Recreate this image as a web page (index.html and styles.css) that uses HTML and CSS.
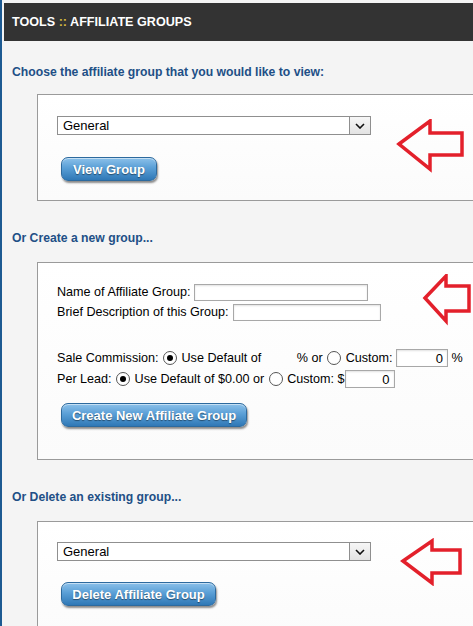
FILE: index.html
```html
<!DOCTYPE html>
<html>
<head>
<meta charset="utf-8">
<link rel="stylesheet" href="styles.css">
</head>
<body>
<div class="page">
  <div class="titlebar">TOOLS <span class="sep">::</span> AFFILIATE GROUPS</div>

  <h2 class="heading h-first">Choose the affiliate group that you would like to view:</h2>
  <div class="box box-view">
    <div class="select-wrap"><select class="select"><option>General</option></select><span class="select-btn"><svg width="10" height="6" viewBox="0 0 10 6"><path d="M1 1 L5 5 L9 1" fill="none" stroke="#111" stroke-width="1.6"/></svg></span></div>
    <button class="btn btn-view">View Group</button>
    <svg class="arrow arrow-1" width="70" height="54" viewBox="0 0 70 54"><path d="M3 25 L34 2 L34 14 L66 14 L66 36 L34 36 L34 50 Z" fill="none" stroke="#e3202b" stroke-width="3.5" stroke-linejoin="miter"/></svg>
  </div>

  <h2 class="heading">Or Create a new group...</h2>
  <div class="box box-create">
    <div class="row"><span class="lbl">Name of Affiliate Group:</span><input class="text text-name" type="text"></div>
    <div class="row"><span class="lbl">Brief Description of this Group:</span><input class="text text-desc" type="text"></div>
    <div class="row row-gap">Sale Commission: <input class="radio" type="radio" name="sc" checked> Use Default of <span class="blank"></span>% or <input class="radio" type="radio" name="sc"> Custom: <input class="text num num-pct" type="text" value="0"> %</div>
    <div class="row">Per Lead: <input class="radio" type="radio" name="pl" checked> Use Default of $0.00 or <input class="radio" type="radio" name="pl"> Custom: $<input class="text num num-lead" type="text" value="0"></div>
    <button class="btn btn-create">Create New Affiliate Group</button>
    <svg class="arrow arrow-2" width="52" height="52" viewBox="0 0 52 52"><path d="M3 24 L24 2 L24 12 L47 12 L47 37 L24 37 L24 47 Z" fill="none" stroke="#e3202b" stroke-width="3.5"/></svg>
  </div>

  <h2 class="heading">Or Delete an existing group...</h2>
  <div class="box box-delete">
    <div class="select-wrap"><select class="select"><option>General</option></select><span class="select-btn"><svg width="10" height="6" viewBox="0 0 10 6"><path d="M1 1 L5 5 L9 1" fill="none" stroke="#111" stroke-width="1.6"/></svg></span></div>
    <button class="btn btn-delete">Delete Affiliate Group</button>
    <svg class="arrow arrow-3" width="64" height="48" viewBox="0 0 64 48"><path d="M3 23 L32 3 L32 12 L60 12 L60 35 L32 35 L32 45 Z" fill="none" stroke="#e3202b" stroke-width="3.5"/></svg>
  </div>
</div>
</body>
</html>
```

FILE: styles.css
```css
html, body {
  margin: 0;
  padding: 0;
  background: #f4f4f4;
  overflow: hidden;
}
body {
  font-family: "Liberation Sans", Arial, sans-serif;
  font-size: 12.6px;
  color: #000;
}
.page {
  border-left: 2px solid #1d5a92;
  padding-left: 2px;
  padding-top: 3px;
  min-height: 626px;
  box-sizing: border-box;
}
.titlebar {
  background: #333333;
  color: #fff;
  font-weight: bold;
  font-size: 12.6px;
  height: 38px;
  line-height: 38px;
  padding-left: 8px;
}
.sep { color: #d7b740; }
.heading {
  margin: 29px 0 16px 8px;
  font-size: 12.2px;
  line-height: 16px;
  font-weight: bold;
  color: #214f86;
}
.h-first { margin-top: 23px; margin-bottom: 14px; }
.box {
  position: relative;
  margin-left: 33px;
  margin-right: -20px;
  border: 1px solid #9a9a9a;
  background: linear-gradient(#ffffff, #fbfbfb);
  padding: 21px 20px 0 19px;
  box-sizing: border-box;
}
.box-view { height: 107px; }
.box-create { height: 198px; padding-top: 19px; }
.box-delete { height: 120px; padding-top: 20px; }

.select-wrap {
  position: relative;
  width: 314px;
  height: 19px;
}
.select {
  appearance: none;
  -webkit-appearance: none;
  width: 314px;
  height: 19px;
  border: 1px solid #8f8f8f;
  border-radius: 0;
  background: #fff;
  font-family: "Liberation Sans", Arial, sans-serif;
  font-size: 13px;
  padding: 0 0 0 5px;
  margin: 0;
  color: #000;
  box-sizing: border-box;
  display: block;
}
.select-btn {
  position: absolute;
  right: 0;
  top: 0;
  width: 22px;
  height: 19px;
  box-sizing: border-box;
  border: 1px solid #8f8f8f;
  background: linear-gradient(#f6f6f6, #e3e3e3);
  display: flex;
  align-items: center;
  justify-content: center;
}

.btn {
  display: block;
  box-sizing: border-box;
  border: 1px solid #2d6a9e;
  border-radius: 7px;
  background: linear-gradient(#8cc1ea 0%, #5a9fd6 45%, #2f78b6 100%);
  color: #fff;
  font-family: "Liberation Sans", Arial, sans-serif;
  font-weight: bold;
  font-size: 13px;
  white-space: nowrap;
  text-shadow: 0 1px 1px rgba(0,0,0,0.45);
  box-shadow: 1px 2px 2px rgba(0,0,0,0.45), inset 0 1px 0 rgba(255,255,255,0.5);
  height: 24px;
  padding: 0;
  margin-left: 4px;
  cursor: pointer;
}
.btn-view { margin-top: 22px; width: 96px; }
.btn-create { margin-top: 14px; width: 186px; }
.btn-delete { margin-top: 21px; width: 155px; }

.row {
  display: flex;
  align-items: center;
  height: 20px;
  line-height: 20px;
  white-space: pre;
}
.row-gap { margin-top: 25px; height: 22px; }
.lbl { margin-right: 4px; }
.text {
  flex: none;
  height: 17px;
  box-sizing: border-box;
  border: 1px solid #a8a8a8;
  box-shadow: inset 0 1px 2px rgba(0,0,0,0.12);
  background: #fff;
  margin: 0;
  padding: 0 4px;
  font-family: "Liberation Sans", Arial, sans-serif;
  font-size: 13px;
}
input.text-name { width: 174px; min-width: 174px; }
input.text-desc { width: 148px; min-width: 148px; }
.num { text-align: right; height: 18px; }
.num-pct { width: 52px; }
.num-lead { width: 50px; }
.blank { display: inline-block; width: 32px; }
.radio {
  flex: none;
  appearance: none;
  -webkit-appearance: none;
  width: 14px;
  height: 14px;
  border: 1px solid #555;
  border-radius: 50%;
  background: #fff;
  margin: 0 1px 0 1px;
  box-sizing: border-box;
  position: relative;
}
.radio:checked::after {
  content: "";
  position: absolute;
  left: 3px;
  top: 3px;
  width: 6px;
  height: 6px;
  border-radius: 50%;
  background: #000;
}

.arrow { position: absolute; }
.arrow-1 { left: 358px; top: 24px; }
.arrow-2 { left: 384px; top: 11px; }
.arrow-3 { left: 362px; top: 16px; }
```
